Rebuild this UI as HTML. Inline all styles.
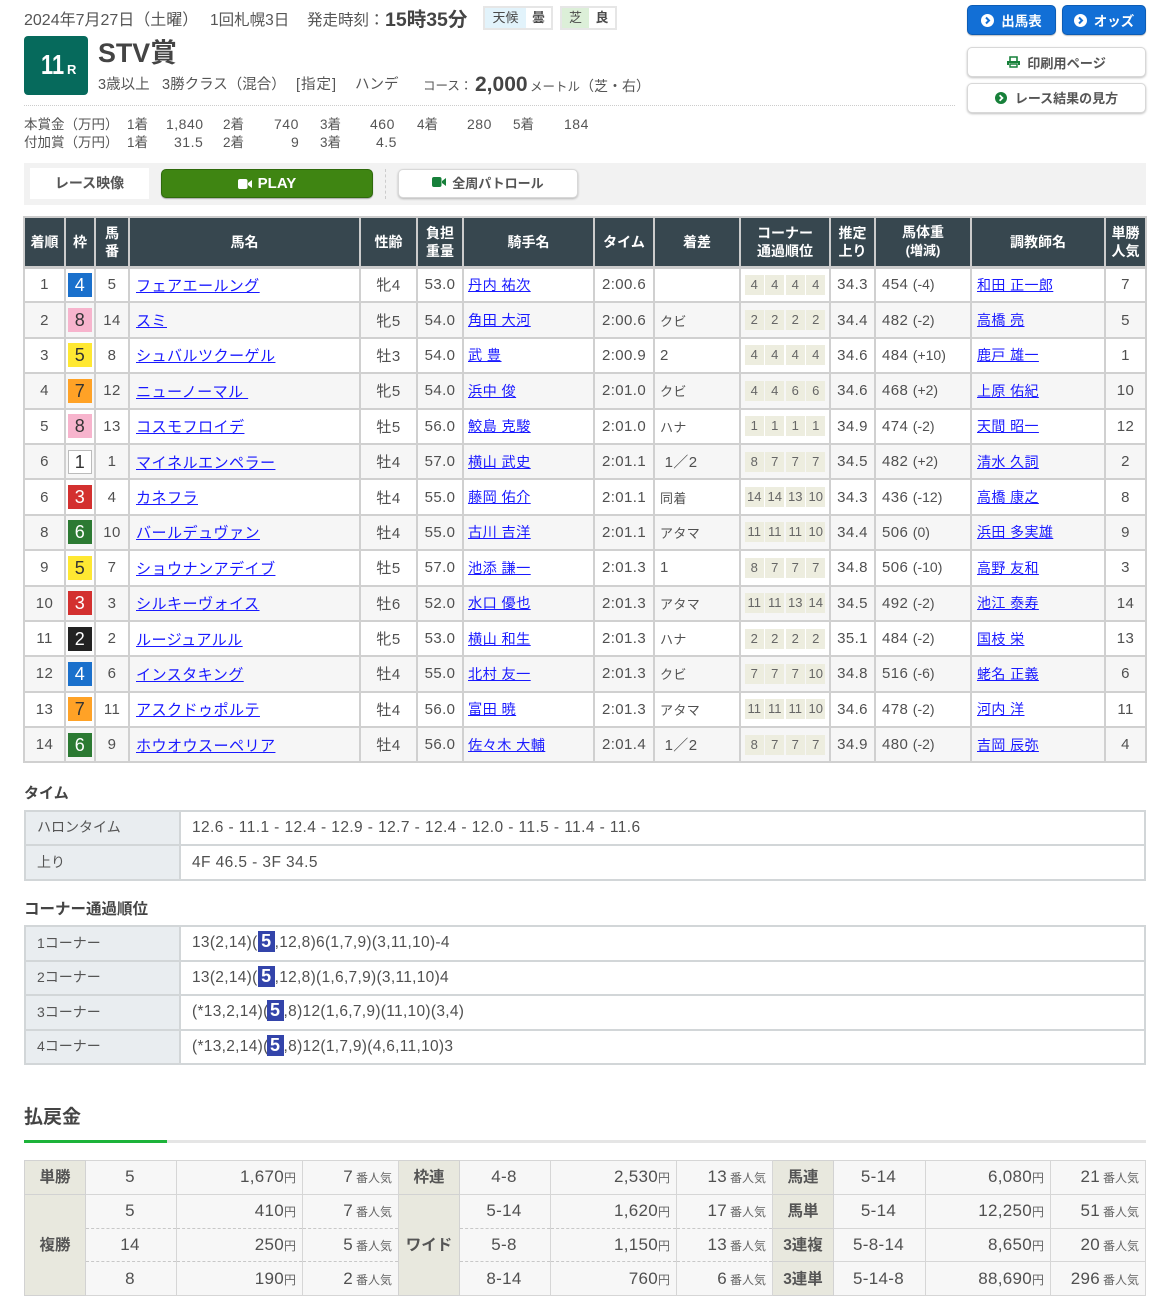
<!DOCTYPE html>
<html lang="ja"><head><meta charset="utf-8"><title>STV賞</title>
<style>
*{box-sizing:border-box}
html,body{margin:0;padding:0;background:#fff}
body{width:1170px;height:1306px;overflow:hidden;position:relative;font-family:"Liberation Sans","Noto Sans CJK JP",sans-serif;color:#4a4a4a;font-size:15px}
.a{position:absolute;white-space:nowrap;line-height:20px}
table{border-collapse:collapse;table-layout:fixed;position:absolute}
.m{left:23px;top:216px;width:1122px}
.m th{background:#37474f;color:#fff;font-size:14px;line-height:18px;font-weight:700;border:2px solid #ccc;border-bottom-width:3px;padding:0;text-align:center;height:50px}
.m td{border:2px solid #d0d0d0;padding:0;height:35.4px;text-align:center;font-size:15px;letter-spacing:.4px;white-space:nowrap;overflow:hidden;color:#505050}
.m tr:nth-child(even) td{background:#f6f6f6}
.m td.l{text-align:left;padding-left:4px}
.m td.h{padding-left:6px}
.m td.g{padding-left:6px}
.m td.g a{font-size:14px;margin-left:-1px}
.m td.d{text-align:left;padding-left:5px;font-size:13px}
.m td.d span{font-size:15px}
.m td.tm{text-align:left;padding-left:7px}
.m a{color:#1a1aff;text-decoration:underline;font-size:14.2px}
.m td.h a{font-size:15.1px}
.m small{font-size:14px;letter-spacing:0}
.w{display:block;width:24px;height:24px;margin:0 auto;line-height:24px;font-size:18px;font-weight:400;color:#fff;text-align:center}
.w1{background:#fff;color:#333;border:1px solid #bbb;line-height:22px}.w2{background:#222}.w3{background:#d3302f}.w4{background:#1a70cc}.w5{background:#ffe832;color:#333}.w6{background:#2c7a33}.w7{background:#ffa226;color:#333}.w8{background:#f7b4cd;color:#333}
.c{display:flex;justify-content:center;gap:1.5px}
.c i{font-style:normal;width:19px;height:20px;line-height:20px;background:#ededdf;font-size:13px;color:#666;letter-spacing:0;text-align:center}
.s{left:24px;width:1122px}
.s th{background:#e9edf0;font-weight:400;text-align:left;padding:0 0 2px 11px;border:2px solid #d2d6d8;font-size:14px;color:#555}
.s td{border:2px solid #d2d6d8;padding:0 0 0 11px;font-size:15.5px;letter-spacing:.3px;color:#505050;white-space:nowrap}
.s td.t{letter-spacing:.41px}
.s b{display:inline-block;background:#3344aa;color:#fff;width:17px;height:21px;line-height:21px;text-align:center;font-size:18px;letter-spacing:0;vertical-align:middle;margin:-3px 0 0 0}
.s b.k{margin-left:-2px}
.p{left:24px;top:1160px;width:1121px}
.p th{background:#e8e8de;color:#555;font-size:15.5px;font-weight:700;border:1.5px solid #d2d2d2;padding:0 0 2px;text-align:center}
.p td{background:#f7f7f7;border:1.5px solid #d6d6d6;height:33.75px;padding:0 2px 0 0;text-align:center;font-size:17px;letter-spacing:.3px;color:#505050;white-space:nowrap}
.p td.r{text-align:right;padding-right:6px}
.p small{font-size:12px;letter-spacing:0;color:#666}
.p small.n{margin-left:3px}
.p td.bt{border-bottom:1px dashed #c8c8c8}
.p td.tt{border-top:1px dashed #c8c8c8}
.btn{position:absolute;border-radius:5px;text-align:center;font-weight:700;font-size:14px;white-space:nowrap;display:flex;align-items:center;justify-content:center;gap:7px}
.bl{background:#126fd6;color:#fff;border:1px solid #0c5cb5;box-shadow:0 1px 1px rgba(0,0,0,.25);font-size:13.5px}
.wh{background:#fff;color:#555;border:1px solid #d8d8d8;box-shadow:0 1px 2px rgba(0,0,0,.25);font-size:13.2px}
.pr{font-size:14px;color:#555;letter-spacing:.5px;margin-top:-1px}
.pr.t,.pr.u{letter-spacing:0;font-size:13.5px;margin-top:0}
</style></head><body>
<div class="a" style="left:24px;top:11px;font-size:16px;color:#555">2024年7月27日（土曜）</div>
<div class="a" style="left:210px;top:11px;font-size:15.5px;color:#555">1回札幌3日</div>
<div class="a" style="left:307px;top:11px;font-size:15.5px;color:#555">発走時刻：</div>
<div class="a" style="left:385px;top:10px;font-size:19.5px;font-weight:700;color:#444">15時35分</div>
<div class="a" style="left:483px;top:6px;width:70px;height:24px;border:2px solid #e6e6e6;font-size:13px;line-height:20px"><span style="display:inline-block;width:41px;background:#e2f3fb;text-align:center">天候</span><span style="display:inline-block;width:25px;text-align:center;font-weight:700">曇</span></div>
<div class="a" style="left:560px;top:6px;width:57px;height:24px;border:2px solid #e6e6e6;font-size:13px;line-height:20px"><span style="display:inline-block;width:27px;background:#dcefd8;text-align:center">芝</span><span style="display:inline-block;width:26px;text-align:center;font-weight:700">良</span></div>
<div class="a" style="left:24px;top:36px;width:64px;height:59px;background:#066a5c;border-radius:4px;color:#fff;font-weight:700">
<span style="position:absolute;left:17px;top:14px;font-size:28px;line-height:30px;display:block;transform:scaleX(.78);transform-origin:0 0">11</span><span style="position:absolute;left:43px;top:27px;font-size:13px;line-height:14px">R</span></div>
<div class="a" style="left:98px;top:38px;font-size:26.8px;line-height:30px;font-weight:700;color:#444">STV賞</div>
<div class="a" style="left:98px;top:75px;font-size:14.5px;color:#555">3歳以上</div>
<div class="a" style="left:162px;top:75px;font-size:14.5px;color:#555">3勝クラス（混合）</div>
<div class="a" style="left:296px;top:75px;font-size:14.5px;color:#555;letter-spacing:1px">[指定]</div>
<div class="a" style="left:355px;top:75px;font-size:14.5px;color:#555">ハンデ</div>
<div class="a" style="left:423px;top:76px;font-size:12.5px;color:#555">コース：</div>
<div class="a" style="left:475px;top:75px;font-size:21px;font-weight:700;color:#444">2,000</div>
<div class="a" style="left:530px;top:76px;font-size:12.5px;color:#555">メートル<span style="font-size:14px">（芝・右）</span></div>
<div class="a" style="left:24px;top:105px;width:931px;border-top:1px dotted #ccc;height:0"></div>

<div class="a pr t" style="left:24px;top:115px">本賞金（万円）</div><div class="a pr u" style="left:127px;top:115px">1着</div><div class="a pr" style="left:166px;top:115px">1,840</div><div class="a pr u" style="left:223px;top:115px">2着</div><div class="a pr" style="left:274px;top:115px">740</div><div class="a pr u" style="left:320px;top:115px">3着</div><div class="a pr" style="left:370px;top:115px">460</div><div class="a pr u" style="left:417px;top:115px">4着</div><div class="a pr" style="left:467px;top:115px">280</div><div class="a pr u" style="left:513px;top:115px">5着</div><div class="a pr" style="left:564px;top:115px">184</div>
<div class="a pr t" style="left:24px;top:133px">付加賞（万円）</div><div class="a pr u" style="left:127px;top:133px">1着</div><div class="a pr" style="left:174px;top:133px">31.5</div><div class="a pr u" style="left:223px;top:133px">2着</div><div class="a pr" style="left:291px;top:133px">9</div><div class="a pr u" style="left:320px;top:133px">3着</div><div class="a pr" style="left:376px;top:133px">4.5</div>

<div class="btn bl" style="left:967px;top:5px;width:89px;height:30px"><svg width="13" height="13" viewBox="0 0 13 13"><circle cx="6.5" cy="6.5" r="6.5" fill="#fff"/><path d="M5 3.5l3 3-3 3" fill="none" stroke="#126fd6" stroke-width="2"/></svg>出馬表</div>
<div class="btn bl" style="left:1062px;top:5px;width:84px;height:30px"><svg width="13" height="13" viewBox="0 0 13 13"><circle cx="6.5" cy="6.5" r="6.5" fill="#fff"/><path d="M5 3.5l3 3-3 3" fill="none" stroke="#126fd6" stroke-width="2"/></svg>オッズ</div>
<div class="btn wh" style="left:967px;top:47px;width:179px;height:30px"><svg width="13" height="12" viewBox="0 0 13 12"><path d="M3 5V1h7v4" fill="none" stroke="#17803a" stroke-width="1.6"/><path d="M0 5h13v4h-2V7H2v2H0z" fill="#17803a"/><path d="M3 8h7v3H3z" fill="none" stroke="#17803a" stroke-width="1.4"/></svg>印刷用ページ</div>
<div class="btn wh" style="left:967px;top:83px;width:179px;height:30px;gap:8px;font-size:13px;padding-bottom:1px"><svg width="12" height="12" viewBox="0 0 13 13"><circle cx="6.5" cy="6.5" r="6.5" fill="#17803a"/><path d="M5 3.5l3 3-3 3" fill="none" stroke="#fff" stroke-width="2"/></svg>レース結果の見方</div>

<div class="a" style="left:24px;top:163px;width:1122px;height:42px;background:#f2f2f2"></div>
<div class="a" style="left:30px;top:168px;width:119px;height:31px;background:#fff;text-align:center;line-height:31px;font-weight:700;font-size:14px;color:#555">レース映像</div>
<div class="btn" style="left:161px;top:169px;width:212px;height:29px;background:#3f8512;border:1px solid #2f6a0c;color:#fff;font-size:15px;gap:6px;box-shadow:0 1px 1px rgba(0,0,0,.3)"><svg width="14" height="10" viewBox="0 0 14 10"><rect width="9.5" height="10" rx="2" fill="#fff"/><path d="M10 4l4-3v8l-4-3z" fill="#fff"/></svg>PLAY</div>
<div class="a" style="left:385px;top:169px;height:30px;border-left:1px dashed #ccc"></div>
<div class="btn wh" style="left:398px;top:169px;width:180px;height:29px;font-size:13px;gap:6px;padding-bottom:3px"><svg width="14" height="10" viewBox="0 0 14 10"><rect width="9.5" height="10" rx="2" fill="#17803a"/><path d="M10 4l4-3v8l-4-3z" fill="#17803a"/></svg>全周パトロール</div>

<table class="m"><colgroup><col style="width:41px"><col style="width:30px"><col style="width:34px"><col style="width:231px"><col style="width:57px"><col style="width:46px"><col style="width:131px"><col style="width:60px"><col style="width:86px"><col style="width:90px"><col style="width:45px"><col style="width:96px"><col style="width:134px"><col style="width:41px"></colgroup>
<thead><tr><th>着順</th><th>枠</th><th>馬<br>番</th><th>馬名</th><th>性齢</th><th>負担<br>重量</th><th>騎手名</th><th>タイム</th><th>着差</th><th>コーナー<br>通過順位</th><th>推定<br>上り</th><th>馬体重<br><span style="font-size:13px">(増減)</span></th><th>調教師名</th><th>単勝<br>人気</th></tr></thead>
<tbody>
<tr><td>1</td><td><b class="w w4">4</b></td><td>5</td><td class="l h"><a href="#">フェアエールング</a></td><td>牝4</td><td>53.0</td><td class="l"><a href="#">丹内 祐次</a></td><td class="tm">2:00.6</td><td class="d"></td><td><div class="c"><i>4</i><i>4</i><i>4</i><i>4</i></div></td><td>34.3</td><td class="l g">454 <small>(-4)</small></td><td class="l g"><a href="#">和田 正一郎</a></td><td>7</td></tr>
<tr><td>2</td><td><b class="w w8">8</b></td><td>14</td><td class="l h"><a href="#">スミ</a></td><td>牝5</td><td>54.0</td><td class="l"><a href="#">角田 大河</a></td><td class="tm">2:00.6</td><td class="d">クビ</td><td><div class="c"><i>2</i><i>2</i><i>2</i><i>2</i></div></td><td>34.4</td><td class="l g">482 <small>(-2)</small></td><td class="l g"><a href="#">高橋 亮</a></td><td>5</td></tr>
<tr><td>3</td><td><b class="w w5">5</b></td><td>8</td><td class="l h"><a href="#">シュバルツクーゲル</a></td><td>牡3</td><td>54.0</td><td class="l"><a href="#">武 豊</a></td><td class="tm">2:00.9</td><td class="d"><span>2</span></td><td><div class="c"><i>4</i><i>4</i><i>4</i><i>4</i></div></td><td>34.6</td><td class="l g">484 <small>(+10)</small></td><td class="l g"><a href="#">鹿戸 雄一</a></td><td>1</td></tr>
<tr><td>4</td><td><b class="w w7">7</b></td><td>12</td><td class="l h"><a href="#">ニューノーマル&nbsp;</a></td><td>牝5</td><td>54.0</td><td class="l"><a href="#">浜中 俊</a></td><td class="tm">2:01.0</td><td class="d">クビ</td><td><div class="c"><i>4</i><i>4</i><i>6</i><i>6</i></div></td><td>34.6</td><td class="l g">468 <small>(+2)</small></td><td class="l g"><a href="#">上原 佑紀</a></td><td>10</td></tr>
<tr><td>5</td><td><b class="w w8">8</b></td><td>13</td><td class="l h"><a href="#">コスモフロイデ</a></td><td>牡5</td><td>56.0</td><td class="l"><a href="#">鮫島 克駿</a></td><td class="tm">2:01.0</td><td class="d">ハナ</td><td><div class="c"><i>1</i><i>1</i><i>1</i><i>1</i></div></td><td>34.9</td><td class="l g">474 <small>(-2)</small></td><td class="l g"><a href="#">天間 昭一</a></td><td>12</td></tr>
<tr><td>6</td><td><b class="w w1">1</b></td><td>1</td><td class="l h"><a href="#">マイネルエンペラー</a></td><td>牡4</td><td>57.0</td><td class="l"><a href="#">横山 武史</a></td><td class="tm">2:01.1</td><td class="d"><span>&nbsp;1／2</span></td><td><div class="c"><i>8</i><i>7</i><i>7</i><i>7</i></div></td><td>34.5</td><td class="l g">482 <small>(+2)</small></td><td class="l g"><a href="#">清水 久詞</a></td><td>2</td></tr>
<tr><td>6</td><td><b class="w w3">3</b></td><td>4</td><td class="l h"><a href="#">カネフラ</a></td><td>牡4</td><td>55.0</td><td class="l"><a href="#">藤岡 佑介</a></td><td class="tm">2:01.1</td><td class="d">同着</td><td><div class="c"><i>14</i><i>14</i><i>13</i><i>10</i></div></td><td>34.3</td><td class="l g">436 <small>(-12)</small></td><td class="l g"><a href="#">高橋 康之</a></td><td>8</td></tr>
<tr><td>8</td><td><b class="w w6">6</b></td><td>10</td><td class="l h"><a href="#">バールデュヴァン</a></td><td>牡4</td><td>55.0</td><td class="l"><a href="#">古川 吉洋</a></td><td class="tm">2:01.1</td><td class="d">アタマ</td><td><div class="c"><i>11</i><i>11</i><i>11</i><i>10</i></div></td><td>34.4</td><td class="l g">506 <small>(0)</small></td><td class="l g"><a href="#">浜田 多実雄</a></td><td>9</td></tr>
<tr><td>9</td><td><b class="w w5">5</b></td><td>7</td><td class="l h"><a href="#">ショウナンアデイブ</a></td><td>牡5</td><td>57.0</td><td class="l"><a href="#">池添 謙一</a></td><td class="tm">2:01.3</td><td class="d"><span>1</span></td><td><div class="c"><i>8</i><i>7</i><i>7</i><i>7</i></div></td><td>34.8</td><td class="l g">506 <small>(-10)</small></td><td class="l g"><a href="#">高野 友和</a></td><td>3</td></tr>
<tr><td>10</td><td><b class="w w3">3</b></td><td>3</td><td class="l h"><a href="#">シルキーヴォイス</a></td><td>牡6</td><td>52.0</td><td class="l"><a href="#">水口 優也</a></td><td class="tm">2:01.3</td><td class="d">アタマ</td><td><div class="c"><i>11</i><i>11</i><i>13</i><i>14</i></div></td><td>34.5</td><td class="l g">492 <small>(-2)</small></td><td class="l g"><a href="#">池江 泰寿</a></td><td>14</td></tr>
<tr><td>11</td><td><b class="w w2">2</b></td><td>2</td><td class="l h"><a href="#">ルージュアルル</a></td><td>牝5</td><td>53.0</td><td class="l"><a href="#">横山 和生</a></td><td class="tm">2:01.3</td><td class="d">ハナ</td><td><div class="c"><i>2</i><i>2</i><i>2</i><i>2</i></div></td><td>35.1</td><td class="l g">484 <small>(-2)</small></td><td class="l g"><a href="#">国枝 栄</a></td><td>13</td></tr>
<tr><td>12</td><td><b class="w w4">4</b></td><td>6</td><td class="l h"><a href="#">インスタキング</a></td><td>牡4</td><td>55.0</td><td class="l"><a href="#">北村 友一</a></td><td class="tm">2:01.3</td><td class="d">クビ</td><td><div class="c"><i>7</i><i>7</i><i>7</i><i>10</i></div></td><td>34.8</td><td class="l g">516 <small>(-6)</small></td><td class="l g"><a href="#">蛯名 正義</a></td><td>6</td></tr>
<tr><td>13</td><td><b class="w w7">7</b></td><td>11</td><td class="l h"><a href="#">アスクドゥポルテ</a></td><td>牡4</td><td>56.0</td><td class="l"><a href="#">富田 暁</a></td><td class="tm">2:01.3</td><td class="d">アタマ</td><td><div class="c"><i>11</i><i>11</i><i>11</i><i>10</i></div></td><td>34.6</td><td class="l g">478 <small>(-2)</small></td><td class="l g"><a href="#">河内 洋</a></td><td>11</td></tr>
<tr><td>14</td><td><b class="w w6">6</b></td><td>9</td><td class="l h"><a href="#">ホウオウスーペリア</a></td><td>牡4</td><td>56.0</td><td class="l"><a href="#">佐々木 大輔</a></td><td class="tm">2:01.4</td><td class="d"><span>&nbsp;1／2</span></td><td><div class="c"><i>8</i><i>7</i><i>7</i><i>7</i></div></td><td>34.9</td><td class="l g">480 <small>(-2)</small></td><td class="l g"><a href="#">吉岡 辰弥</a></td><td>4</td></tr>
</tbody></table>

<div class="a" style="left:24px;top:784px;font-size:15px;font-weight:700;color:#444">タイム</div>
<table class="s" style="top:810px"><colgroup><col style="width:155px"><col></colgroup>
<tr style="height:34px"><th>ハロンタイム</th><td class="t">12.6 - 11.1 - 12.4 - 12.9 - 12.7 - 12.4 - 12.0 - 11.5 - 11.4 - 11.6</td></tr>
<tr style="height:35px"><th>上り</th><td class="t">4F 46.5 - 3F 34.5</td></tr></table>

<div class="a" style="left:24px;top:900px;font-size:15.5px;font-weight:700;color:#444">コーナー通過順位</div>
<table class="s" style="top:925px"><colgroup><col style="width:155px"><col></colgroup>
<tr style="height:35px"><th>1コーナー</th><td>13(2,14)(<b>5</b>,12,8)6(1,7,9)(3,11,10)-4</td></tr>
<tr style="height:34px"><th>2コーナー</th><td>13(2,14)(<b>5</b>,12,8)(1,6,7,9)(3,11,10)4</td></tr>
<tr style="height:35px"><th>3コーナー</th><td>(*13,2,14)(<b class="k">5</b>,8)12(1,6,7,9)(11,10)(3,4)</td></tr>
<tr style="height:34px"><th>4コーナー</th><td>(*13,2,14)(<b class="k">5</b>,8)12(1,7,9)(4,6,11,10)3</td></tr></table>

<div class="a" style="left:24px;top:1105px;font-size:19px;line-height:26px;font-weight:700;color:#444">払戻金</div>
<div class="a" style="left:24px;top:1140px;width:1122px;height:3px;background:#e5e5e5"></div>
<div class="a" style="left:24px;top:1140px;width:143px;height:3px;background:#1db33a"></div>

<table class="p"><colgroup><col style="width:61px"><col style="width:91px"><col style="width:126px"><col style="width:96px"><col style="width:61px"><col style="width:91px"><col style="width:126px"><col style="width:96px"><col style="width:61px"><col style="width:92px"><col style="width:125px"><col style="width:95px"></colgroup>
<tr><th>単勝</th><td>5</td><td class="r">1,670<small>円</small></td><td class="r">7<small class="n">番人気</small></td><th>枠連</th><td>4-8</td><td class="r">2,530<small>円</small></td><td class="r">13<small class="n">番人気</small></td><th>馬連</th><td>5-14</td><td class="r">6,080<small>円</small></td><td class="r">21<small class="n">番人気</small></td></tr>
<tr><th rowspan="3">複勝</th><td class="bt">5</td><td class="r bt">410<small>円</small></td><td class="r bt">7<small class="n">番人気</small></td><th rowspan="3">ワイド</th><td class="bt">5-14</td><td class="r bt">1,620<small>円</small></td><td class="r bt">17<small class="n">番人気</small></td><th>馬単</th><td>5-14</td><td class="r">12,250<small>円</small></td><td class="r">51<small class="n">番人気</small></td></tr>
<tr><td class="bt tt">14</td><td class="r bt tt">250<small>円</small></td><td class="r bt tt">5<small class="n">番人気</small></td><td class="bt tt">5-8</td><td class="r bt tt">1,150<small>円</small></td><td class="r bt tt">13<small class="n">番人気</small></td><th>3連複</th><td>5-8-14</td><td class="r">8,650<small>円</small></td><td class="r">20<small class="n">番人気</small></td></tr>
<tr><td class="tt">8</td><td class="r tt">190<small>円</small></td><td class="r tt">2<small class="n">番人気</small></td><td class="tt">8-14</td><td class="r tt">760<small>円</small></td><td class="r tt">6<small class="n">番人気</small></td><th>3連単</th><td>5-14-8</td><td class="r">88,690<small>円</small></td><td class="r">296<small class="n">番人気</small></td></tr>
</table>
</body></html>
